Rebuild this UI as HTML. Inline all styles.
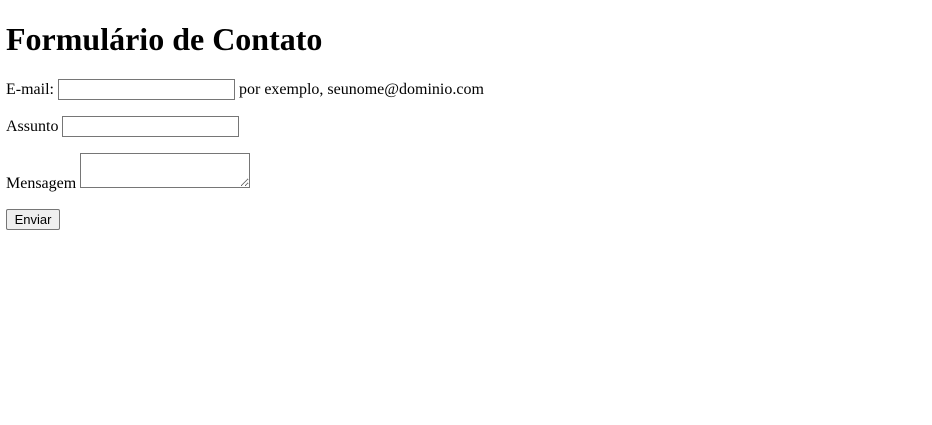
<!DOCTYPE html>
<html><head><style>
body{margin:8px 6px;font-family:"Liberation Serif",serif;font-size:16px;background:#fff;color:#000}
h1{font-size:32px;margin:21px 0}
p{margin:16px 0}
input[type=text]{width:171px;height:17px;border:1px solid #767676;padding:1px 2px;font-size:13px;vertical-align:baseline;margin:0}
textarea{width:166px;height:31px;border:1px solid #767676;padding:1px;margin:0;vertical-align:baseline}
button{font-family:"Liberation Sans",sans-serif;font-size:13px;padding:1px 7px;border:1px solid #767676;background:#efefef;border-radius:2px;height:21px;width:54px}
</style></head><body>
<h1>Formulário de Contato</h1>
<form>
<p>E-mail: <input type="text"> por exemplo, seunome@dominio.com</p>
<p>Assunto <input type="text"></p>
<p>Mensagem <textarea></textarea></p>
<p><button type="button">Enviar</button></p>
</form>
</body></html>
